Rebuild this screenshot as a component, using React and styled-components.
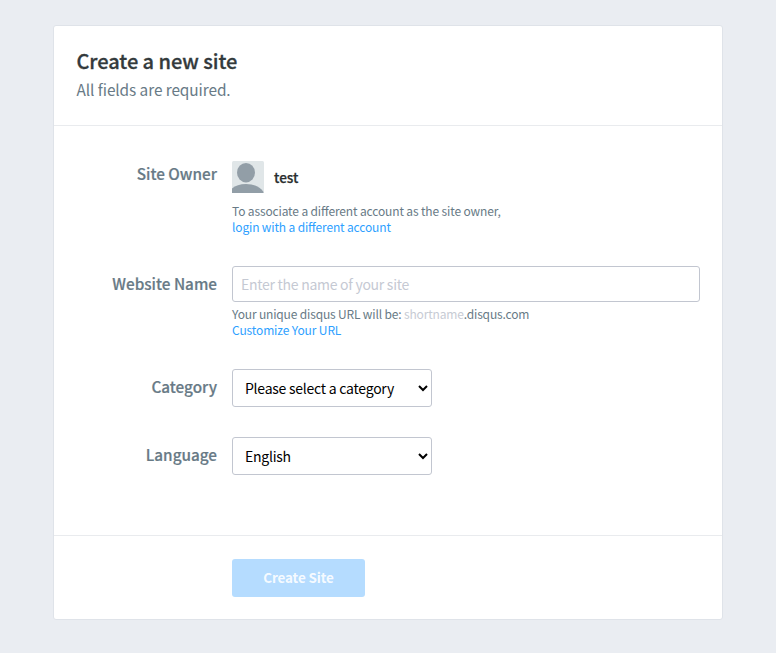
import React from 'react';
import styled, { createGlobalStyle } from 'styled-components';

const Global = createGlobalStyle`
  *, *::before, *::after { box-sizing: border-box; }
  body {
    margin: 0; background: #eaedf2; color: #687a86;
    font-family: "Noto Sans CJK SC", "Noto Sans", sans-serif;
    font-feature-settings: "liga" 1;
  }
`;
const Page = styled.main`height: 653px; padding: 25px 53px 0; overflow: hidden;`;
const Card = styled.form`
  width: 670px; height: 595px; background: #fff; border: 1px solid #dfe3e9; border-radius: 3px;
  display: flex; flex-direction: column;
`;
const Header = styled.header`
  height: 100px; padding: 21px 22.5px 0; border-bottom: 1px solid #e9ebee;
`;
const Title = styled.h1`
  margin: 0; font-size: 20px; line-height: 28px; font-weight: 500; letter-spacing: -0.05px;
  color: #333a3c; -webkit-text-stroke: 0.3px #333a3c;
`;
const Subtitle = styled.p`margin: 0; font-size: 15.4px; line-height: 28px; letter-spacing: -0.08px;`;
const Fields = styled.div`flex: 1; padding: 35px 22px 0 0;`;
const Row = styled.div`
  display: grid; grid-template-columns: 163px 468px; column-gap: 15px; height: ${p => p.$height}px;
`;
const Label = styled.label`
  text-align: right; font-size: 15.3px; line-height: 24px; font-weight: 500; padding-top: ${p => p.$top}px;
  -webkit-text-stroke: 0.2px #687a86;
`;
const Owner = styled.div`
  display: flex; align-items: center; gap: 10px; height: 32px;
  font-size: 13.6px; font-weight: 500; color: #2a2e2e; -webkit-text-stroke: 0.25px #2a2e2e;
`;
const Note = styled.p`
  margin: ${p => p.$top}px 0 0; font-size: 12px; line-height: 16px; letter-spacing: ${p => p.$spacing}px;
`;
const Link = styled.a`
  color: #2e9fff; display: block; text-decoration: none; letter-spacing: ${p => p.$spacing}px;
`;
const Faint = styled.span`color: #c7cbd4;`;
const Input = styled.input`
  display: block; width: 468px; height: 36px; border: 1px solid #c2c6d0; border-radius: 3px; padding: 0 8px;
  font: 14px "Noto Sans CJK SC", sans-serif; letter-spacing: -0.27px; outline: 0;
  &::placeholder { color: #c5c9d3; }
`;
const Select = styled.select`
  display: block; width: 200px; height: 38px; border: 1px solid #c2c6d0; border-radius: 3px; padding: 0 0 0 8px;
  background: #fff; font: 14px "Noto Sans CJK SC", sans-serif; letter-spacing: -0.24px; color: #000;
`;
const Footer = styled.footer`height: 84px; border-top: 1px solid #e9ebee; padding: 23px 0 0 178px;`;
const Submit = styled.button`
  display: block; width: 133px; height: 38px; border: 0; border-radius: 3px; background: #b5dcff;
  color: rgba(255, 255, 255, 0.9); padding: 0 0 2px;
  font: 700 13.4px "Noto Sans CJK SC", sans-serif; letter-spacing: -0.08px;
`;

function Avatar() {
  return (
    <svg width="32" height="32" viewBox="0 0 32 32">
      <rect width="32" height="32" rx="1.5" fill="#e0e6e8" />
      <ellipse cx="14" cy="11.7" rx="9" ry="9.7" fill="#929ea7" />
      <path d="M0 32V27.5Q5 23 14 23Q26 23 31.5 31V32Z" fill="#929ea7" />
    </svg>
  );
}

export default function App() {
  return (
    <Page>
      <Global />
      <Card>
        <Header>
          <Title>Create a new site</Title>
          <Subtitle>All fields are required.</Subtitle>
        </Header>
        <Fields>
          <Row $height={105}>
            <Label $top={0}>Site Owner</Label>
            <div>
              <Owner><Avatar />test</Owner>
              <Note $top={10} $spacing={-0.14}>
                To associate a different account as the site owner,
                <Link $spacing={-0.15}>login with a different account</Link>
              </Note>
            </div>
          </Row>
          <Row $height={103}>
            <Label $top={5}>Website Name</Label>
            <div>
              <Input placeholder="Enter the name of your site" />
              <Note $top={4} $spacing={-0.16}>
                Your unique disqus URL will be: <Faint>shortname</Faint>.disqus.com
                <Link $spacing={-0.13}>Customize Your URL</Link>
              </Note>
            </div>
          </Row>
          <Row $height={68}>
            <Label $top={5}>Category</Label>
            <div><Select><option>Please select a category</option></Select></div>
          </Row>
          <Row $height={38}>
            <Label $top={5}>Language</Label>
            <div><Select><option>English</option></Select></div>
          </Row>
        </Fields>
        <Footer><Submit type="button">Create Site</Submit></Footer>
      </Card>
    </Page>
  );
}
